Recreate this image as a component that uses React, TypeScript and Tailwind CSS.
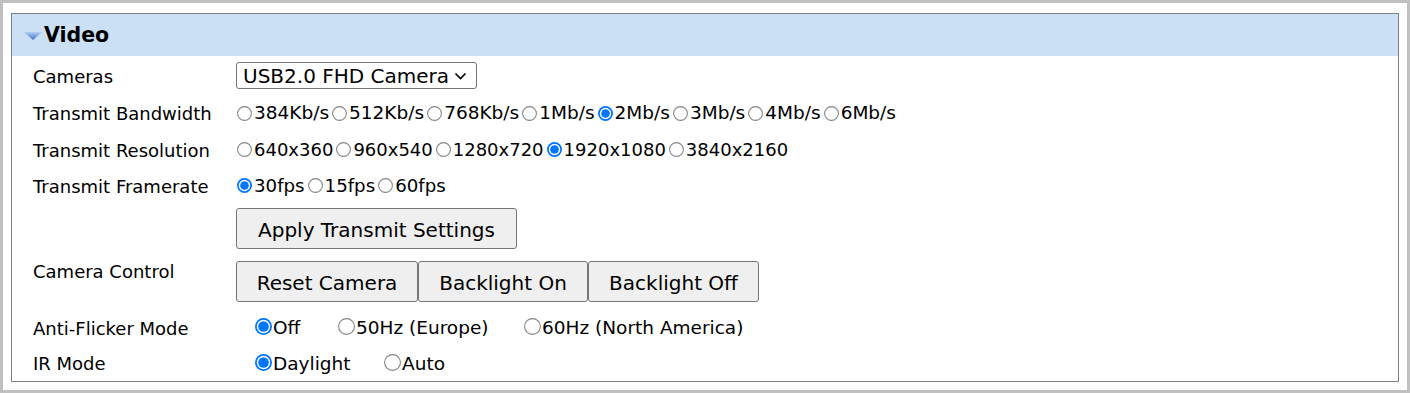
import React from "react";

const bandwidths = ["384Kb/s", "512Kb/s", "768Kb/s", "1Mb/s", "2Mb/s", "3Mb/s", "4Mb/s", "6Mb/s"];
const resolutions = ["640x360", "960x540", "1280x720", "1920x1080", "3840x2160"];
const framerates = ["30fps", "15fps", "60fps"];

// drawn radio so the size matches the zoomed page
const Radio = ({ on, size }: { on: boolean; size: number }) => {
  const c = size / 2;
  return (
    <svg width={size} height={size} viewBox={`0 0 ${size} ${size}`} className="shrink-0">
      {on ? (
        <>
          <circle cx={c} cy={c} r={c} fill="#0075ff" />
          <circle cx={c} cy={c} r={c - 1.8} fill="#fff" />
          <circle cx={c} cy={c} r={c - 3.2} fill="#0075ff" />
        </>
      ) : (
        <circle cx={c} cy={c} r={c - 0.6} fill="#fff" stroke="#858585" strokeWidth="1.1" />
      )}
    </svg>
  );
};

const InlineRadios = ({ items, checked, size = "text-[18.5px]" }: { items: string[]; checked: string; size?: string }) => (
  <div className={`flex items-center pt-[1px] ${size}`}>
    {items.map((item) => (
      <label key={item} className="flex items-center">
        <span className="ml-[1px] mr-[2px]">
          <Radio on={item === checked} size={15} />
        </span>
        <span className="mr-[2px]">{item}</span>
      </label>
    ))}
  </div>
);

const CellRadios = ({ items, checked }: { items: [string, string][]; checked: string }) => (
  <div className="flex items-center text-[18.5px] pl-[19px] pt-[2px]">
    {items.map(([item, w]) => (
      <label key={item} className={`flex items-center ${w}`}>
        <span className="mr-[1px] -mt-[3px]">
          <Radio on={item === checked} size={17} />
        </span>
        <span>{item}</span>
      </label>
    ))}
  </div>
);

const Row = ({ label, h, top, children }: { label: string; h: string; top?: boolean; children: React.ReactNode }) => (
  <div className={`flex ${h} ${top ? "items-start pt-[7px]" : "items-center"}`}>
    <div className={`w-[224px] pl-[21px] shrink-0 ${top ? "leading-[22px]" : "pt-[2px]"}`}>{label}</div>
    {children}
  </div>
);

const btn = "h-[41px] bg-[#efefef] border border-[#767676] rounded-[3px] text-[20px] flex items-center justify-center pt-[2px]";

export default function App() {
  return (
    <div className="h-[393px] border-[3px] border-[#c0c0c0] bg-white pt-[10px] px-[8px] pb-[8px] font-['DejaVu_Sans',Verdana,sans-serif] text-black text-[18px]">
      <div className="border border-[#808080] h-[369px]">
        <div className="h-[42px] bg-[#cbe0f4] flex items-center pl-[12px]">
          <svg width="18" height="8" viewBox="0 0 18 8" className="mr-[2px] mt-[1px]">
            <defs>
              <linearGradient id="tri" x1="0" y1="0" x2="0" y2="1">
                <stop offset="0" stopColor="#b4d0f2" />
                <stop offset="1" stopColor="#3f73c4" />
              </linearGradient>
            </defs>
            <polygon points="0,0 18,0 9,8" fill="url(#tri)" />
          </svg>
          <span className="font-bold text-[20.5px]">Video</span>
        </div>

        <Row label="Cameras" h="h-[38px]">
          <div className="h-[27px] w-[241px] border border-[#767676] rounded-[3px] flex items-center pl-[6px] text-[20px] pt-[1px]">
            <span>USB2.0 FHD Camera</span>
            <svg width="13" height="8" viewBox="0 0 13 8" className="ml-[5px]">
              <path d="M1.5 1.5 L6.5 6.5 L11.5 1.5" fill="none" stroke="#000" strokeWidth="1.6" />
            </svg>
          </div>
        </Row>
        <Row label="Transmit Bandwidth" h="h-[37px]">
          <InlineRadios items={bandwidths} checked="2Mb/s" />
        </Row>
        <Row label="Transmit Resolution" h="h-[36px]">
          <InlineRadios items={resolutions} checked="1920x1080" size="text-[18px]" />
        </Row>
        <Row label="Transmit Framerate" h="h-[36px]">
          <InlineRadios items={framerates} checked="30fps" size="text-[18.2px]" />
        </Row>
        <Row label="" h="h-[51px]">
          <button className={`${btn} w-[281px]`}>Apply Transmit Settings</button>
        </Row>
        <Row label="Camera Control" h="h-[55px]" top>
          <div className="flex">
            <button className={`${btn} w-[182px]`}>Reset Camera</button>
            <button className={`${btn} w-[170px]`}>Backlight On</button>
            <button className={`${btn} w-[171px]`}>Backlight Off</button>
          </div>
        </Row>
        <Row label="Anti-Flicker Mode" h="h-[36px]">
          <CellRadios
            items={[["Off", "w-[83px]"], ["50Hz (Europe)", "w-[186px]"], ["60Hz (North America)", ""]]}
            checked="Off"
          />
        </Row>
        <Row label="IR Mode" h="h-[35px]">
          <CellRadios items={[["Daylight", "w-[129px]"], ["Auto", ""]]} checked="Daylight" />
        </Row>
      </div>
    </div>
  );
}
